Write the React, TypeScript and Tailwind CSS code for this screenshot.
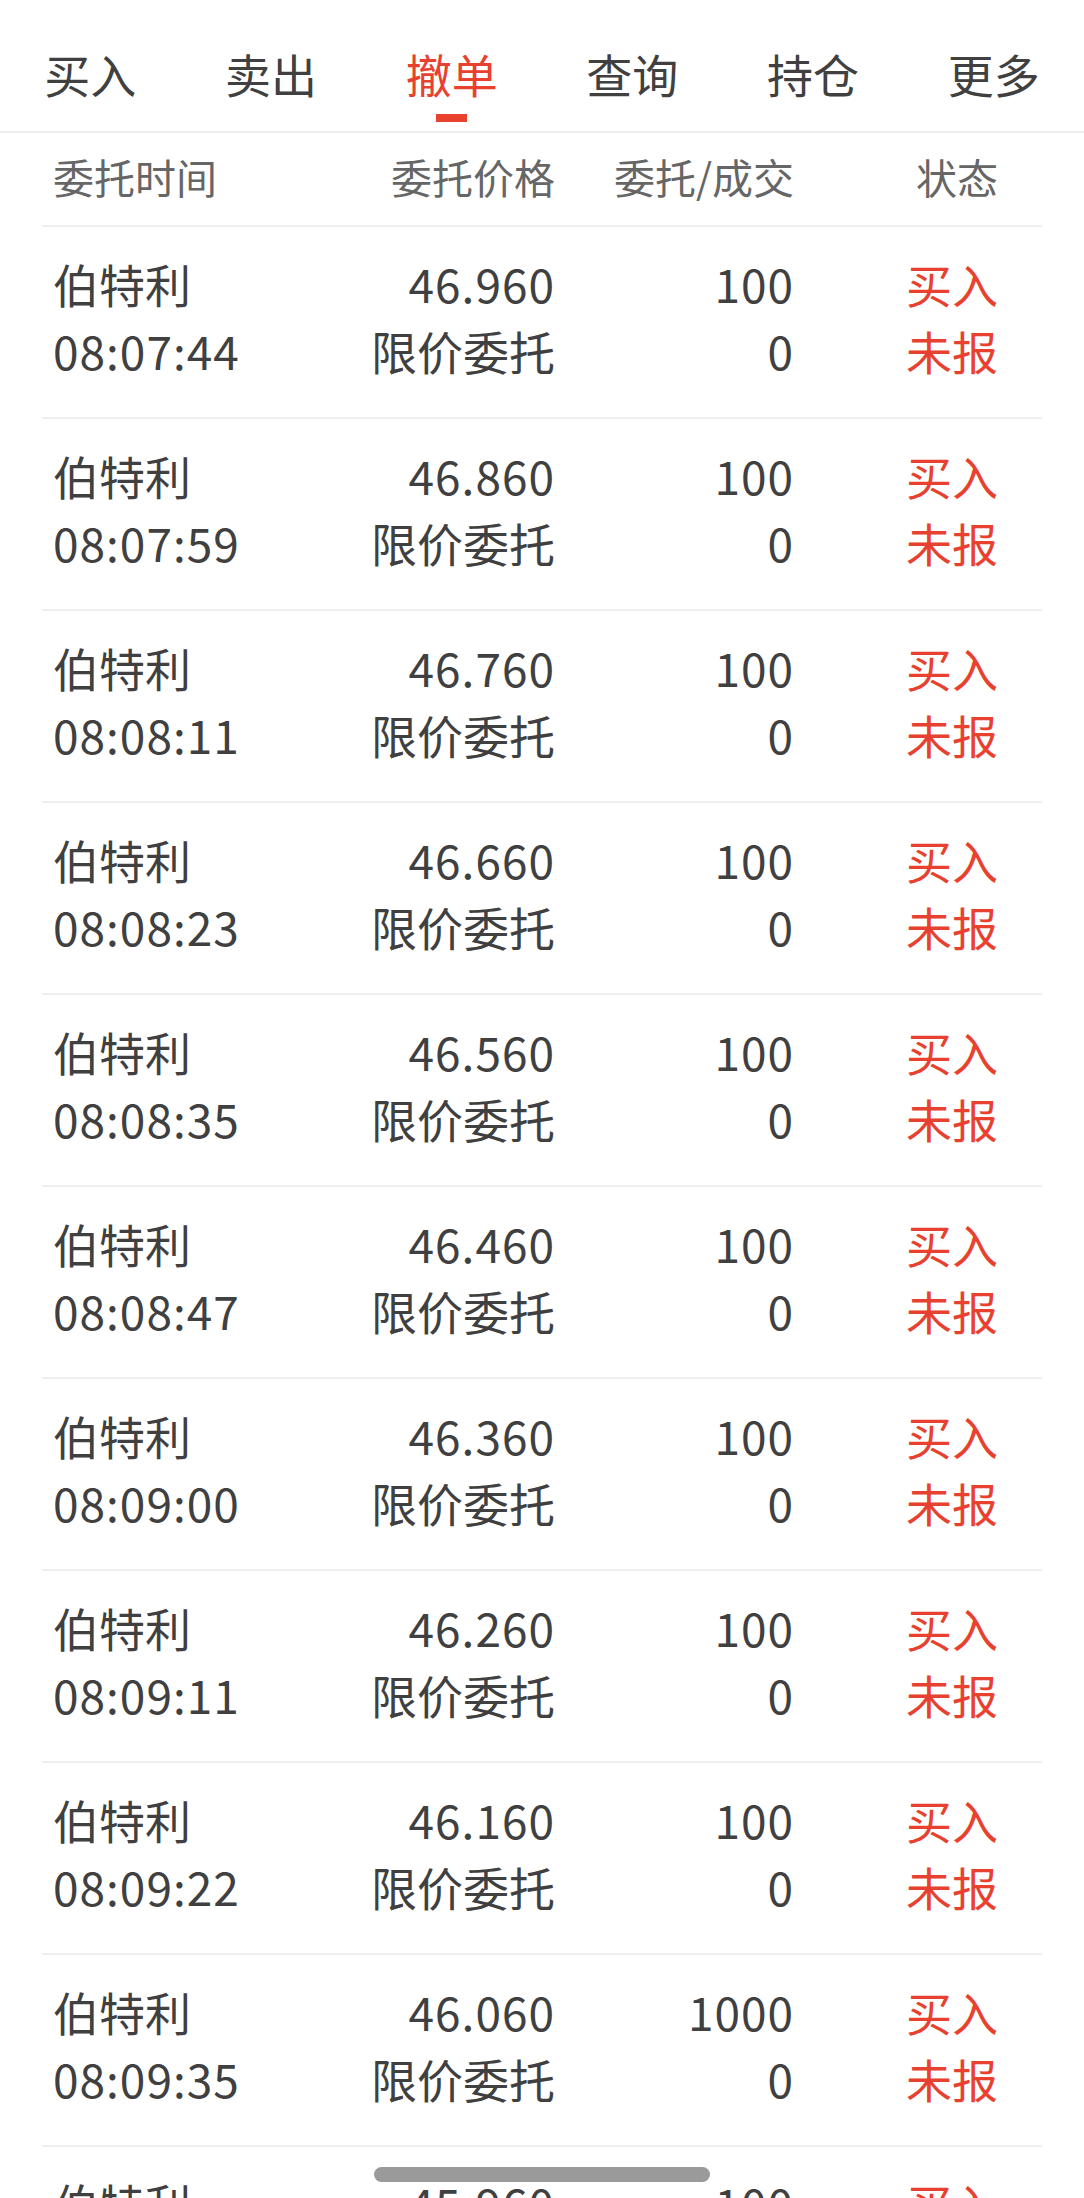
import React from 'react';

const tabs = ['买入', '卖出', '撤单', '查询', '持仓', '更多'];

interface Order {
  time: string;
  price: string;
  qty: string;
}

const orders: Order[] = [
  { time: '08:07:44', price: '46.960', qty: '100' },
  { time: '08:07:59', price: '46.860', qty: '100' },
  { time: '08:08:11', price: '46.760', qty: '100' },
  { time: '08:08:23', price: '46.660', qty: '100' },
  { time: '08:08:35', price: '46.560', qty: '100' },
  { time: '08:08:47', price: '46.460', qty: '100' },
  { time: '08:09:00', price: '46.360', qty: '100' },
  { time: '08:09:11', price: '46.260', qty: '100' },
  { time: '08:09:22', price: '46.160', qty: '100' },
  { time: '08:09:35', price: '46.060', qty: '1000' },
  { time: '08:09:47', price: '45.960', qty: '100' },
];

const cols = 'grid grid-cols-[263px_250px_239px_204px] pr-[44px]';

const OrderRow: React.FC<{ order: Order }> = ({ order }) => (
  <div className={`${cols} h-[192px] shrink-0 content-center border-b-2 border-[#efefef] pb-[10px] text-[46px] leading-[67px] text-[#404040]`}>
    <div className="pl-[11px]">
      <div>伯特利</div>
      <div className="tracking-[1px]">{order.time}</div>
    </div>
    <div className="text-right">
      <div className="tracking-[1px]">{order.price}</div>
      <div>限价委托</div>
    </div>
    <div className="text-right tracking-[1px]">
      <div>{order.qty}</div>
      <div>0</div>
    </div>
    <div className="text-right text-[#e8412f]">
      <div>买入</div>
      <div>未报</div>
    </div>
  </div>
);

export default function App() {
  return (
    <div className="relative h-[2198px] w-full overflow-hidden bg-white font-['Noto_Sans_CJK_SC','Noto_Sans',sans-serif]">
      {/* top tabs */}
      <nav className="grid h-[133px] grid-cols-6 border-b-2 border-[#efefef]">
        {tabs.map((t, i) => (
          <div key={t} className="flex flex-col items-center pt-[50px]">
            <span className={`text-[46px] leading-none ${i === 2 ? 'text-[#e8412f]' : 'text-[#404040]'}`}>{t}</span>
            {i === 2 && <span className="mt-[18px] h-[8px] w-[31px] bg-[#e8412f]" />}
          </div>
        ))}
      </nav>

      <div className="mx-[42px] flex flex-col">
        <div className={`${cols} h-[94px] items-center border-b-2 border-[#efefef] pb-[6px] text-[41px] leading-none text-[#666666]`}>
          <div className="pl-[11px]">委托时间</div>
          <div className="text-right">委托价格</div>
          <div className="text-right">委托/成交</div>
          <div className="text-right">状态</div>
        </div>
        {orders.map((o) => (
          <OrderRow key={o.time} order={o} />
        ))}
      </div>

      {/* home indicator */}
      <div className="absolute left-[374px] top-[2167px] h-[15px] w-[336px] rounded-full bg-[#9a9a9a]" />
    </div>
  );
}
